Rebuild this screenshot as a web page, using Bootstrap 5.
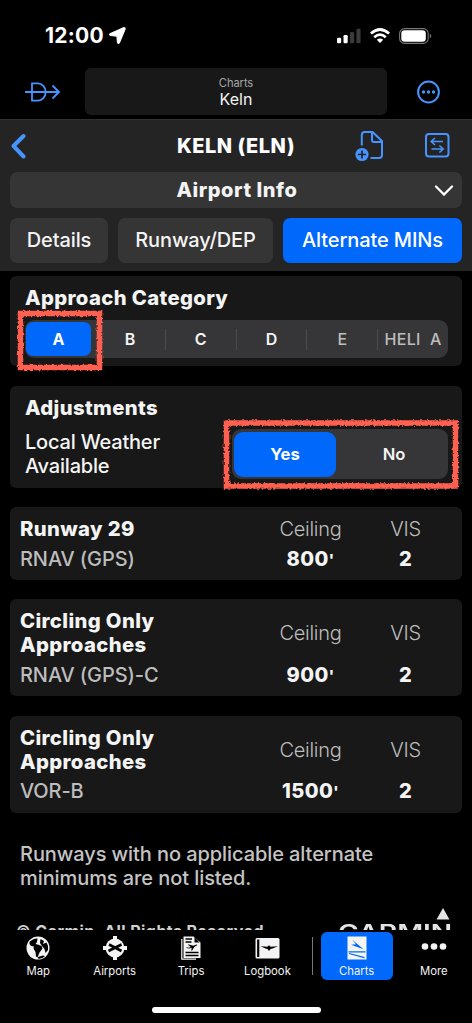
<!DOCTYPE html>
<html lang="en" data-bs-theme="dark">
<head>
<meta charset="utf-8">
<meta name="viewport" content="width=device-width, initial-scale=1">
<title>Charts – Keln</title>
<link href="https://cdn.jsdelivr.net/npm/bootstrap@5.3.0/dist/css/bootstrap.min.css" rel="stylesheet">
<style>
  body { background:#000; color:#f4f4f4; font-family:Inter,"Liberation Sans",sans-serif; font-size:20px; line-height:24px; height:1023px; overflow:hidden; }
  svg { display:block; flex:none; }
  .status { height:68px; padding:3px 40px 0 45px; color:#fff; }
  .clock { font-size:21px; font-weight:700; letter-spacing:.25px; }
  .topbar { height:51px; padding:0 31px 4px 25px; }
  .search { width:302px; height:47px; background:#181818; border-radius:6px; margin-left:24px; }
  .search small { font-size:11.2px; line-height:14px; color:#a6a6a6; padding-top:2px; letter-spacing:-.1px; }
  .search span { font-size:16px; line-height:19px; }
  .head { height:152px; background:#242424; border-top:1px solid #303030; padding:0 10px; }
  .titlebar { height:52px; }
  .titlebar h1 { font-size:20px; font-weight:800; line-height:24px; letter-spacing:.5px; }
  .pill { background:#353535; border:0; border-radius:7px; color:#f4f4f4; }
  .info { height:36px; font-weight:800; letter-spacing:.55px; margin-bottom:9.5px; }
  .seg-btn { height:45px; padding:0; font-size:20px; font-weight:500; letter-spacing:-.12px; line-height:24px; }
  .blue, .blue:hover { background:#0068fa; color:#fff; }
  .content { height:659px; overflow:hidden; padding:5px 10px 0; }
  .panel { background:#181818; border-radius:6px; border:0; }
  .heading { font-size:20.3px; font-weight:800; letter-spacing:.36px; }
  .local { font-weight:500; letter-spacing:-.2px; }
  .segmented { background:#363638; border-radius:9px; }
  .segmented > div { display:flex; align-items:center; justify-content:center; font-weight:600; }
  .cat { height:38px; font-size:16px; }
  .cat > div { flex:1 1 0; }
  .cat .sel { flex:none; width:65px; height:34px; border-radius:7px; margin:0 4px 0 1px; }
  .segmented .sel { font-weight:700; }
  .rule { flex:none !important; width:1px; height:21px; background:#4b4b4e; }
  .segmented > .dim { color:#bdbdbd; white-space:nowrap; font-weight:500; }
  .yn { width:216px; height:50px; font-size:16.600px; }
  .yn .sel { width:102px; height:45px; border-radius:9px; margin-left:2px; }
  .appr { padding:10px 9px 9px 10px; }
  .appr .name { width:243px; }
  .appr .ceil { width:95px; }
  .appr .vis { width:95px; }
  .thin { font-weight:300; color:#bdbdbd; letter-spacing:-.3px; }
  .num { font-weight:800; letter-spacing:.4px; }
  .tick { font-size:15px; vertical-align:1px; }
  .grey { color:#bdbdbd; font-weight:500; letter-spacing:-.1px; }
  .values { padding-top:.5px; }
  .note { padding:29px 10px 0; font-weight:500; color:#c4c4c4; letter-spacing:-.08px; }
  .legal { padding:14px 10px 0 6px; color:#d0d0d0; }
  .copy { font-size:16px; font-weight:700; white-space:nowrap; padding-top:15px; letter-spacing:.42px; }
  .brand { font-weight:600; font-size:21px; line-height:24px; transform:scaleX(1.34); transform-origin:right; color:#e4e4e4; padding-top:1px; }
  .tabs { height:50px; padding-top:2px; font-size:11.300px; line-height:14px; color:#f4f4f4; }
  .tab { width:76.5px; padding-top:4px; gap:3.500px; }
  .tab.on { width:72px; height:48px; background:#0068fa; border-radius:6px; margin:0 3px 0 8px; }
  .tabrule { width:1px; height:38px; background:#777; margin-top:5px; margin-left:6px; }
  .homebar { width:169px; height:6px; border-radius:3px; background:#fff; margin-top:27px; }
  .mark-red { position:absolute; pointer-events:none; z-index:3; }
</style>
</head>
<body>
<svg width="0" height="0" class="position-absolute"><defs>
  <filter id="crayon" x="-10%" y="-10%" width="120%" height="120%"><feTurbulence type="fractalNoise" baseFrequency=".5" numOctaves="2" seed="4"/><feDisplacementMap in="SourceGraphic" scale="4" xChannelSelector="R" yChannelSelector="G"/></filter>
</defs></svg>

<header>
  <div class="status d-flex align-items-center">
    <span class="clock">12:00</span>
    <svg class="ms-1" width="19" height="19" viewBox="0 0 19 19"><path d="M15.500 1.800 2.500 7.500q-1.800 1.100.2 2l6.300.6.500 6.300q.6 1.900 1.900.3L17 3.200q.5-2-1.500-1.400z" fill="#fff" stroke="#fff" stroke-width="1.200" stroke-linejoin="round"/></svg>
    <svg class="ms-auto" width="24" height="16" viewBox="0 0 24 16"><g fill="#fff"><rect y="9.8" width="4.2" height="5.4" rx="1.2"/><rect x="6.5" y="7" width="4.2" height="8.2" rx="1.2"/></g><g fill="#3a3a3a"><rect x="13" y="4" width="4.2" height="11.2" rx="1.2"/><rect x="19.4" y=".8" width="4.2" height="14.4" rx="1.2"/></g></svg>
    <svg style="margin-left:9px" width="20" height="16" viewBox="0 0 20 16"><g fill="none" stroke="#fff" stroke-width="2.7"><path d="M.9 5.6Q10-2.6 19.1 5.6M4.2 9.2Q10 4.2 15.8 9.2"/></g><path d="M6.8 11.8Q10 9.2 13.2 11.8L10 15z" fill="#fff"/></svg>
    <svg style="margin-left:9px" width="33" height="16" viewBox="0 0 33 16"><rect x=".6" y=".6" width="28.6" height="14.8" rx="5" fill="#000" stroke="#777" stroke-width="1.1"/><rect x="2.3" y="2.3" width="24.5" height="11.4" rx="3.3" fill="#fff"/><path d="M30.8 5.5q3 2.4 0 5z" fill="#777"/></svg>
  </div>
  <div class="topbar d-flex align-items-center">
    <svg width="36" height="20" viewBox="0 0 36 20" fill="none" stroke="#4793ff" stroke-width="1.8"><path d="M0 10H34M7 1.400h5.800a7.800 8.500 0 0 1 0 17.200H7zM27.500 3.500 34 10l-6.500 6.500"/></svg>
    <div class="search d-flex flex-column align-items-center justify-content-center"><small>Charts</small><span>Keln</span></div>
    <svg class="ms-auto" width="24" height="24" viewBox="0 0 24 24"><circle cx="11.500" cy="12" r="10.400" fill="none" stroke="#4793ff" stroke-width="2"/><g fill="#4793ff"><circle cx="6.500" cy="12" r="1.700"/><circle cx="11.500" cy="12" r="1.700"/><circle cx="16.500" cy="12" r="1.700"/></g></svg>
  </div>
</header>

<section class="head">
  <div class="titlebar d-flex align-items-center position-relative">
    <svg width="17" height="26" viewBox="0 0 17 26"><path d="M13.500 3 3.500 13l10 10.500" fill="none" stroke="#4793ff" stroke-width="4" stroke-linecap="round" stroke-linejoin="round"/></svg>
    <h1 class="mb-0 position-absolute start-0 end-0 text-center">KELN (ELN)</h1>
    <svg class="ms-auto" width="30" height="32" viewBox="0 0 30 32"><g fill="none" stroke="#4793ff" stroke-width="2" stroke-linejoin="round"><path d="M6.800 15.500V5a3 3 0 0 1 3-3H17.500l9.500 9v14a3 3 0 0 1-3 3H15.500M17 2.500V10a2 2 0 0 0 2 2H26.500" /></g><circle cx="7" cy="24.500" r="6.600" fill="#4793ff"/><path d="M3 24.500h8M7 20.500v8" stroke="#242424" stroke-width="1.700"/></svg>
    <svg style="margin-left:39px;margin-right:12px" width="26" height="26" viewBox="0 0 26 26" fill="none" stroke="#4793ff"><rect x="2" y="1" width="22.500" height="22.500" rx="3" stroke-width="2"/><path d="M19 8.500H7.500M11 5 7.200 8.500l3.800 3.500M7.500 16H19M15.400 12.500l3.800 3.500-3.800 3.500" stroke-width="1.600"/></svg>
  </div>
  <div class="pill info d-flex align-items-center justify-content-center position-relative"><span style="padding-left:2px">Airport Info</span>
    <svg class="position-absolute end-0 me-2" width="20" height="12" viewBox="0 0 20 12"><path d="m2 2.500 8 8 8-8" fill="none" stroke="#fff" stroke-width="2.300" stroke-linecap="round"/></svg>
  </div>
  <div class="d-flex" style="gap:10px">
    <button class="btn pill seg-btn" style="width:98px">Details</button>
    <button class="btn pill seg-btn" style="width:155px">Runway/DEP</button>
    <button class="btn pill blue seg-btn flex-fill">Alternate MINs</button>
  </div>
</section>

<main class="content">
  <section class="panel position-relative" style="height:90px;padding:10px 14px 0 15px;margin-bottom:20px">
    <div class="heading">Approach Category</div>
    <div class="segmented cat d-flex align-items-center" style="margin-top:10px">
      <div class="sel blue">A</div><div>B</div><div class="rule"></div><div>C</div><div class="rule"></div><div>D</div><div class="rule"></div><div class="dim">E</div><div class="rule"></div><div class="dim" style="letter-spacing:.3px">HELI&nbsp;&nbsp;A</div>
    </div>
    <svg class="mark-red" style="left:5px;top:32px" width="90" height="66"><rect x="5.500" y="5.500" width="79" height="54" fill="none" stroke="#ff6150" stroke-width="5.500" filter="url(#crayon)"/></svg>
  </section>

  <section class="panel position-relative d-flex justify-content-between" style="height:102px;padding:10px 14px 0 15px;margin-bottom:19px">
    <div><div class="heading" style="margin-bottom:10px">Adjustments</div><div class="local">Local Weather<br>Available</div></div>
    <div class="segmented yn d-flex align-items-center" style="margin-top:33px"><div class="sel blue">Yes</div><div class="flex-fill" style="padding-left:4px">No</div></div>
    <svg class="mark-red" style="left:210px;top:31px" width="242" height="76"><rect x="6.500" y="6" width="229" height="63" fill="none" stroke="#ff6150" stroke-width="5.500" filter="url(#crayon)"/></svg>
  </section>

  <section class="panel appr d-flex flex-column" style="height:73px;gap:5px;margin-bottom:19px">
    <div class="d-flex align-items-center"><div class="name heading">Runway 29</div><div class="ceil thin text-center">Ceiling</div><div class="vis thin text-center">VIS</div></div>
    <div class="values d-flex"><div class="name grey">RNAV (GPS)</div><div class="ceil num text-center">800<span class="tick">'</span></div><div class="vis num text-center">2</div></div>
  </section>
  <section class="panel appr d-flex flex-column" style="height:97px;gap:5px;margin-bottom:19.500px">
    <div class="d-flex align-items-center"><div class="name heading">Circling Only<br>Approaches</div><div class="ceil thin text-center">Ceiling</div><div class="vis thin text-center">VIS</div></div>
    <div class="values d-flex"><div class="name grey">RNAV (GPS)-C</div><div class="ceil num text-center">900<span class="tick">'</span></div><div class="vis num text-center">2</div></div>
  </section>
  <section class="panel appr d-flex flex-column" style="height:97px;gap:5px">
    <div class="d-flex align-items-center"><div class="name heading">Circling Only<br>Approaches</div><div class="ceil thin text-center">Ceiling</div><div class="vis thin text-center">VIS</div></div>
    <div class="values d-flex"><div class="name grey">VOR-B</div><div class="ceil num text-center">1500<span class="tick">'</span></div><div class="vis num text-center">2</div></div>
  </section>
  <p class="note mb-0">Runways with no applicable alternate<br>minimums are not listed.</p>
  <div class="legal d-flex justify-content-between">
    <div class="copy">© Garmin, All Rights Reserved</div>
    <div class="d-flex flex-column align-items-end">
      <svg width="14" height="12" viewBox="0 0 14 12" style="margin-right:2px;margin-top:4px"><path d="M7 0 13.500 11.500H.5z" fill="#e4e4e4"/></svg>
      <div class="brand">GARMIN</div>
    </div>
  </div>
</main>

<nav class="tabs d-flex">
  <div class="tab d-flex flex-column align-items-center">
    <svg width="24" height="24" viewBox="0 0 24 24"><circle cx="12" cy="12" r="11.500" fill="#f4f4f4"/><path d="M3.500 6Q7 2.200 11.500 2.500L11 6 9.500 8l3 .8 3 1.200 1 2.500-3 4-2 5-1.500-1-.5-4.500-2-3.500.5-2-3-.5L3.500 8zM14.500 3l3.500 2-1 3 3.500-1.500q2.200 3 1.500 7.500l-2.500 3-1-4-2.500-3-2-3zM12 21l5-1.500 2 .8q-3.500 2.900-7 2.200z" fill="#000"/></svg>
    <span>Map</span>
  </div>
  <div class="tab d-flex flex-column align-items-center">
    <svg width="24" height="24" viewBox="0 0 24 24"><g fill="#f4f4f4"><circle cx="12" cy="12" r="9.400"/><path d="M10 0h4v24h-4zM0 10h24v4H0z"/></g><path d="m6 8.500 12.500 6.500M5.500 15 18.500 8.500" stroke="#000" stroke-width="2.600"/></svg>
    <span>Airports</span>
  </div>
  <div class="tab d-flex flex-column align-items-center">
    <svg width="20" height="24" viewBox="0 0 20 24"><path d="M.8 3v20.200H15" fill="none" stroke="#f4f4f4" stroke-width="1.200"/><path d="M2.500.5h10L19.500 6.500V22h-17z" fill="#f4f4f4"/><path d="M13.500 1v5.500h5z" fill="#000"/><path d="M4.500 3H11M4.500 6H10.500M4.500 16.500H17.500M4.500 19.500H17.500" stroke="#000" stroke-width="1.300"/><path d="m5 11.900 1-.6 1.800.5 2-.9L6.800 8.800l1-.4 4.600 1.300 3-1.300 1 .6-3.100 2-2.200 3.400h-1l.7-2.700-2.300.9z" fill="#000"/></svg>
    <span>Trips</span>
  </div>
  <div class="tab d-flex flex-column align-items-center">
    <svg width="25" height="24" viewBox="0 0 25 24"><rect x=".5" y="2" width="24" height="20.500" rx="1.500" fill="#f4f4f4"/><path d="M3.200 3.500v17.500" stroke="#000" stroke-width="2.200"/><path d="m5.500 10.200 7 .6q1.500-2.500 3 0l7.500-.6-5.500 2.300-2 .5-1.500 2-1.500-2-2-.5z" fill="#000"/></svg>
    <span>Logbook</span>
  </div>
  <div class="tabrule"></div>
  <div class="tab on d-flex flex-column align-items-center">
    <svg width="20" height="24" viewBox="0 0 20 24"><path d="M.5.500h19v23H.5z" fill="#f4f4f4"/><path d="m5 3.500 11.500 9.700L4 8.800l5-.5z" fill="#0068fa"/><path d="M1.500 15.800h17M2 17.500l15.500 4.200" fill="none" stroke="#0068fa" stroke-width="1.200"/></svg>
    <span>Charts</span>
  </div>
  <div class="tab d-flex flex-column align-items-center">
    <svg width="26" height="24" viewBox="0 0 26 24"><g fill="#f4f4f4"><circle cx="4" cy="10.500" r="3.300"/><circle cx="13" cy="10.500" r="3.300"/><circle cx="22" cy="10.500" r="3.300"/></g></svg>
    <span>More</span>
  </div>
</nav>
<div class="homebar mx-auto"></div>
<script src="https://cdn.jsdelivr.net/npm/bootstrap@5.3.0/dist/js/bootstrap.bundle.min.js"></script>
</body>
</html>
